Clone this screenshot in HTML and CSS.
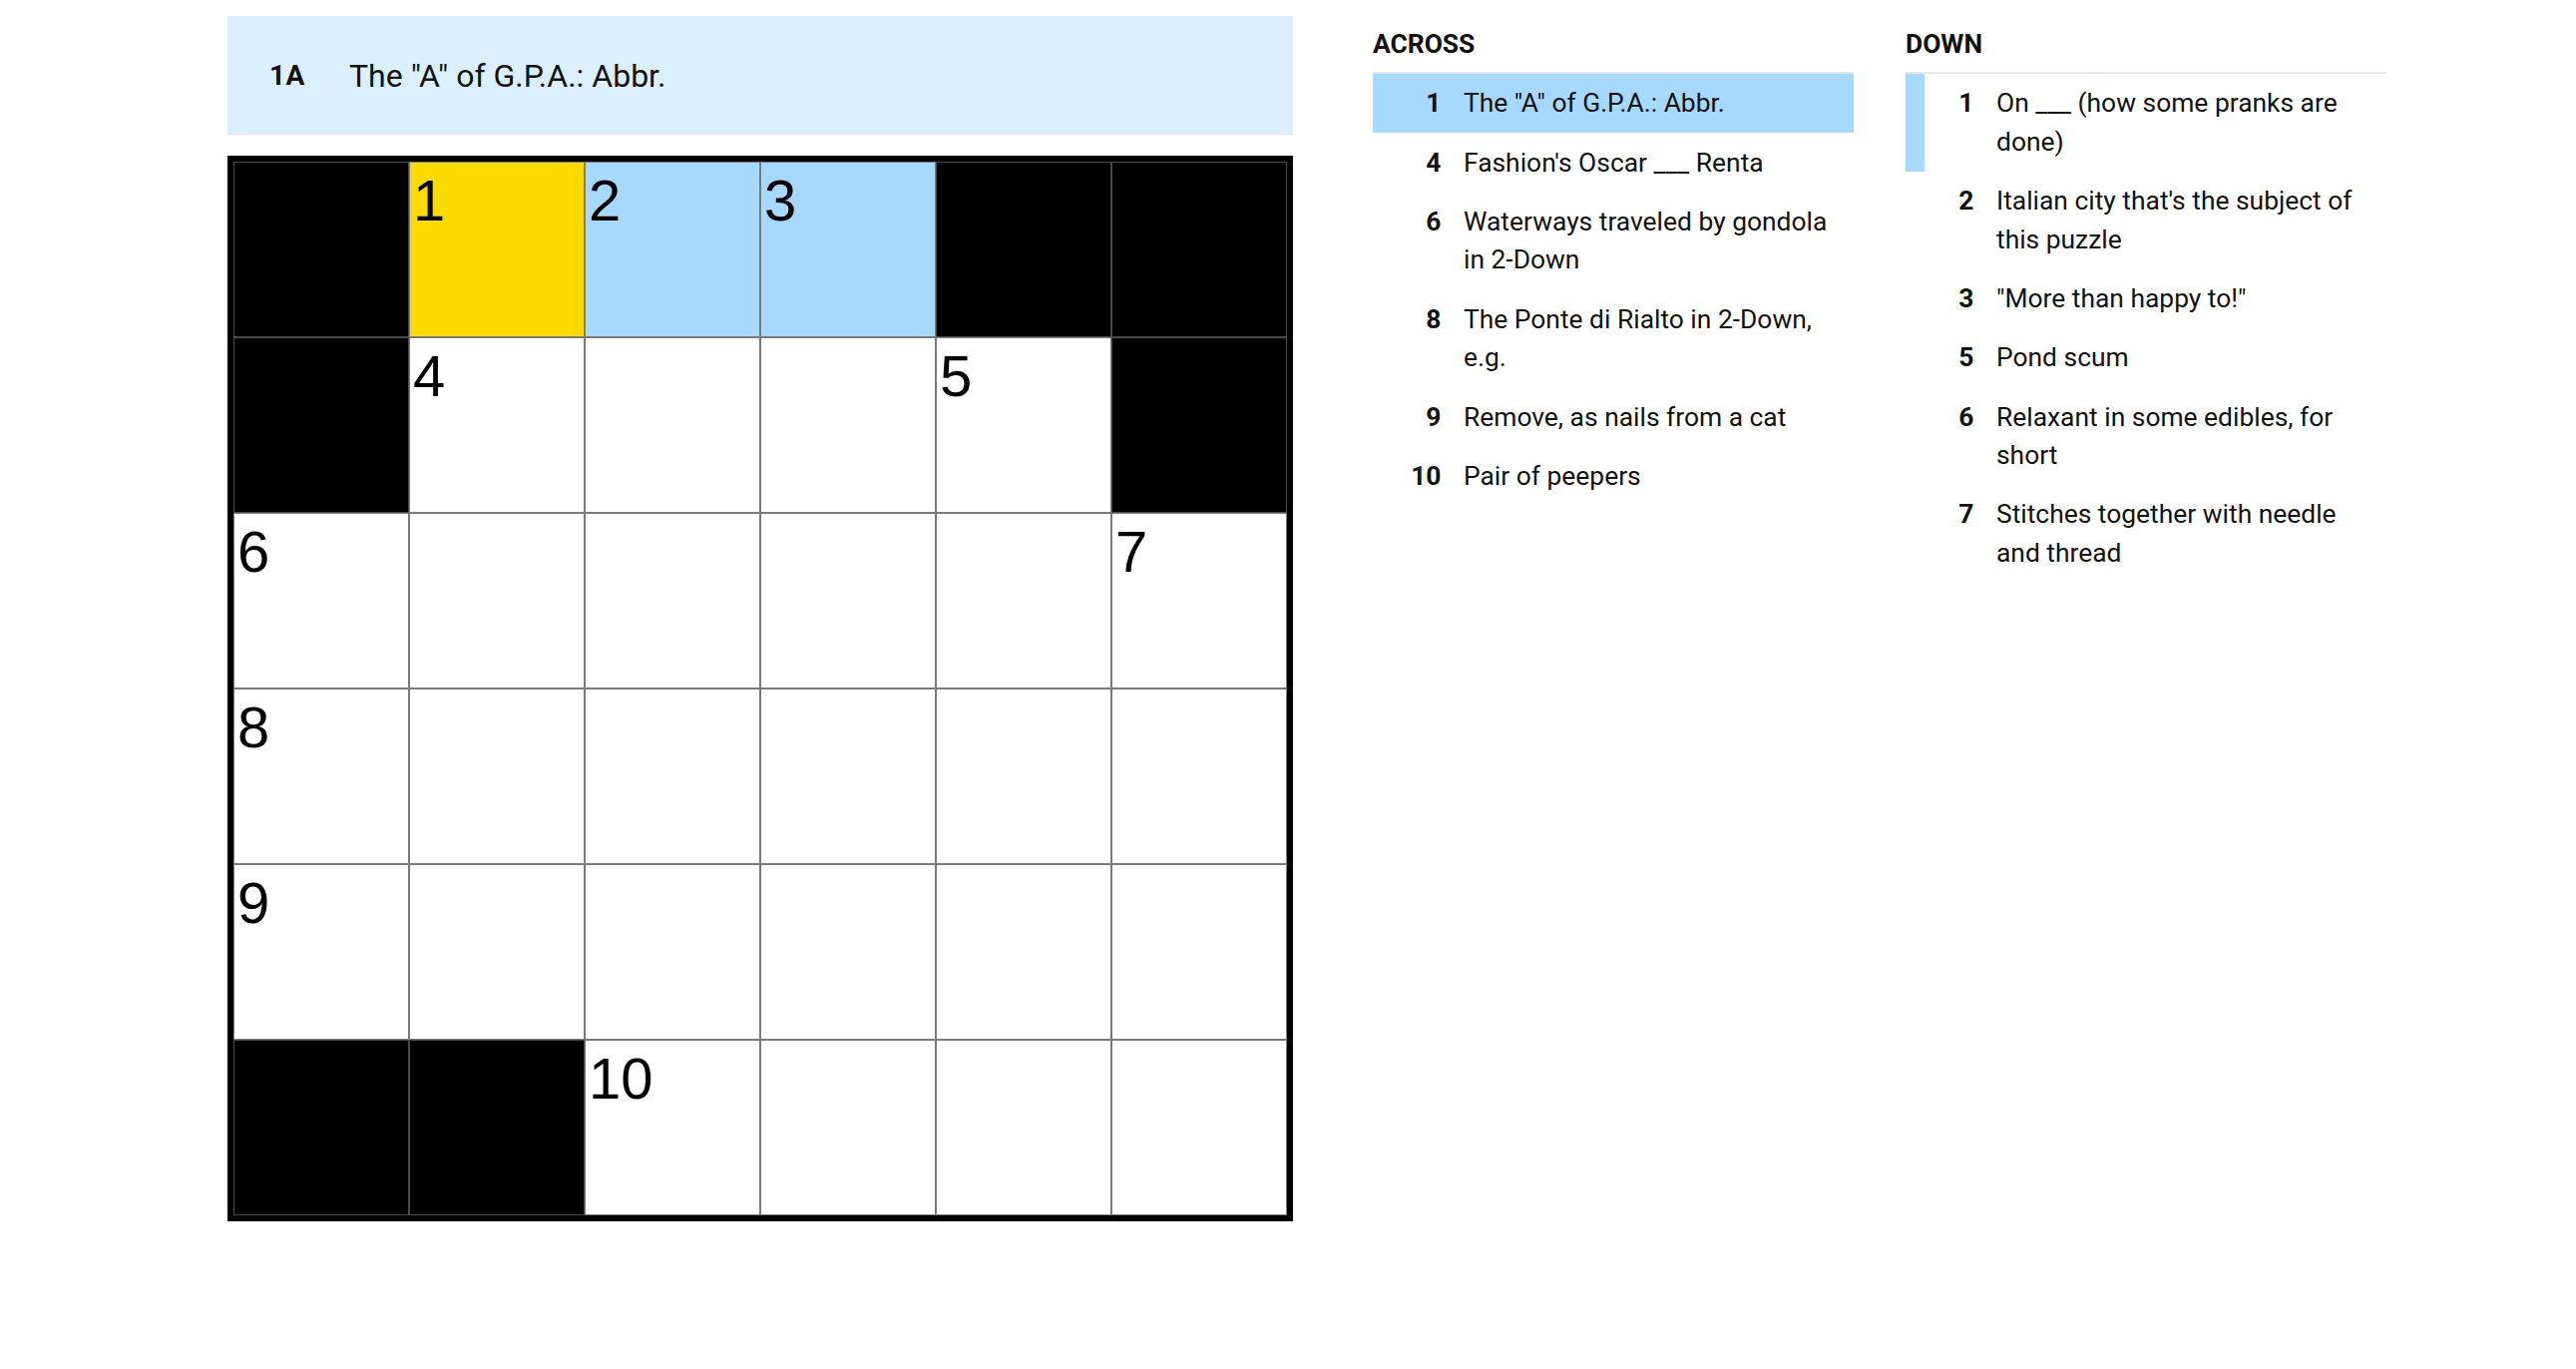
FILE: index.html
```html
<!DOCTYPE html>
<html lang="en">
  <head>
    <meta charset="utf-8" />
    <meta name="viewport" content="width=device-width, initial-scale=1.0" />
    <title>Mini crossword</title>
    <link rel="stylesheet" href="styles.css">
  </head>

  <body>
    <main class="spil">
      <section class="braet">
        <div class="aktiv-ledetraad">
          <span class="etiket">1A</span>
          <span class="tekst">The "A" of G.P.A.: Abbr.</span>
        </div>

        <div class="gitter">
          <div class="felt sort"></div>
          <div class="felt valgt"><span class="nr">1</span></div>
          <div class="felt ord"><span class="nr">2</span></div>
          <div class="felt ord"><span class="nr">3</span></div>
          <div class="felt sort"></div>
          <div class="felt sort"></div>

          <div class="felt sort"></div>
          <div class="felt"><span class="nr">4</span></div>
          <div class="felt"></div>
          <div class="felt"></div>
          <div class="felt"><span class="nr">5</span></div>
          <div class="felt sort"></div>

          <div class="felt"><span class="nr">6</span></div>
          <div class="felt"></div>
          <div class="felt"></div>
          <div class="felt"></div>
          <div class="felt"></div>
          <div class="felt"><span class="nr">7</span></div>

          <div class="felt"><span class="nr">8</span></div>
          <div class="felt"></div>
          <div class="felt"></div>
          <div class="felt"></div>
          <div class="felt"></div>
          <div class="felt"></div>

          <div class="felt"><span class="nr">9</span></div>
          <div class="felt"></div>
          <div class="felt"></div>
          <div class="felt"></div>
          <div class="felt"></div>
          <div class="felt"></div>

          <div class="felt sort"></div>
          <div class="felt sort"></div>
          <div class="felt"><span class="nr">10</span></div>
          <div class="felt"></div>
          <div class="felt"></div>
          <div class="felt"></div>
        </div>
      </section>

      <section class="liste">
        <h3>Across</h3>
        <ol>
          <li class="valgt"><b>1</b><span>The "A" of G.P.A.: Abbr.</span></li>
          <li><b>4</b><span>Fashion's Oscar ___ Renta</span></li>
          <li><b>6</b><span>Waterways traveled by gondola in 2-Down</span></li>
          <li><b>8</b><span>The Ponte di Rialto in 2-Down, e.g.</span></li>
          <li><b>9</b><span>Remove, as nails from a cat</span></li>
          <li><b>10</b><span>Pair of peepers</span></li>
        </ol>
      </section>

      <section class="liste">
        <h3>Down</h3>
        <ol>
          <li class="tvaers"><b>1</b><span>On ___ (how some pranks are done)</span></li>
          <li><b>2</b><span>Italian city that's the subject of this puzzle</span></li>
          <li><b>3</b><span>"More than happy to!"</span></li>
          <li><b>5</b><span>Pond scum</span></li>
          <li><b>6</b><span>Relaxant in some edibles, for short</span></li>
          <li><b>7</b><span>Stitches together with needle and thread</span></li>
        </ol>
      </section>
    </main>
  </body>
</html>
```

FILE: styles.css
```css
body {
  margin: 0;
  font-family: Roboto, "Liberation Sans", sans-serif;
  color: #121212;
  background: #fff;
}

.spil {
  display: flex;
  align-items: flex-start;
  padding-left: 228px;
}

.braet {
  width: 1068px;
  padding-top: 16px;
}

/* blå bjælke med den aktive ledetråd */
.aktiv-ledetraad {
  display: flex;
  align-items: center;
  height: 119px;
  padding-left: 42px;
  background-color: #dcefff;
}

.aktiv-ledetraad .etiket {
  width: 80px;
  font-size: 28px;
  font-weight: 700;
  letter-spacing: 0.5px;
}

.aktiv-ledetraad .tekst {
  font-size: 32px;
}

.gitter {
  display: grid;
  grid-template-columns: repeat(6, 176px);
  grid-auto-rows: 176px;
  margin-top: 21px;
  border: 6px solid #000;
}

.felt {
  box-sizing: border-box;
  border: 1px solid #7a7a7a;
  background-color: #fff;
  padding: 9px 3px;
}

.felt.sort {
  background-color: #000;
  border-color: #4a4a4a;
}

.felt.valgt {
  background-color: #ffda00;
}

.felt.ord {
  background-color: #a7d8ff;
}

.nr {
  display: block;
  font-family: "Liberation Sans", Arial, sans-serif;
  font-size: 58px;
  line-height: 1;
  color: #000;
}

/* lister med ledetråde */
.liste {
  width: 482px;
  margin-top: 25px;
  margin-left: 80px;
}

.liste + .liste {
  margin-left: 52px;
}

.liste h3 {
  margin: 0;
  padding-bottom: 8.5px;
  border-bottom: 2px solid #e6e6e6;
  font-size: 26.4px;
  line-height: 38.5px;
  font-weight: 700;
  text-transform: uppercase;
}

.liste ol {
  list-style: none;
  margin: 0;
  padding: 0;
}

.liste li {
  display: grid;
  grid-template-columns: 68.5px 1fr;
  column-gap: 22.5px;
  padding: 10.4px 15px 10.4px 0;
  font-size: 26.4px;
  line-height: 38.5px;
}

.liste li b {
  text-align: right;
  font-size: 26.4px;
}

.liste li.valgt {
  background-color: #a7d8ff;
}

.liste li.tvaers {
  box-shadow: inset 19px 0 #a7d8ff;
}
```
